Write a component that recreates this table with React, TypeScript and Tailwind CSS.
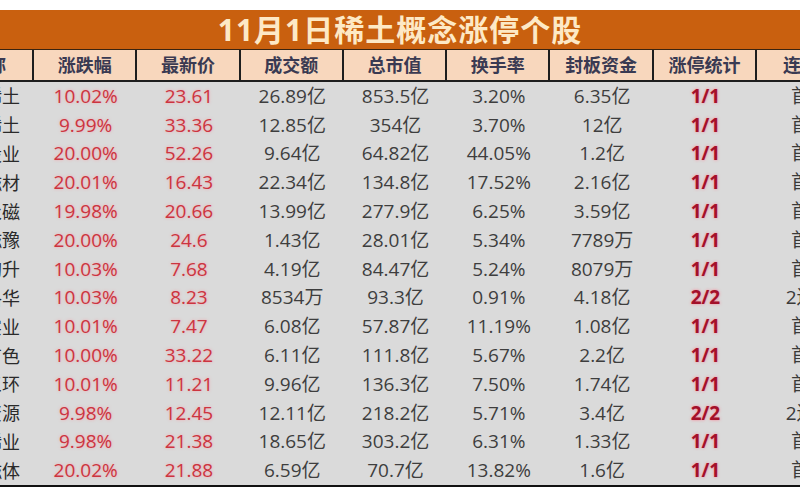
import React from 'react';

const headers = ['股票简称', '涨跌幅', '最新价', '成交额', '总市值', '换手率', '封板资金', '涨停统计', '连板数'];

const rows: string[][] = [
  ['北方稀土', '10.02%', '23.61', '26.89亿', '853.5亿', '3.20%', '6.35亿', '1/1', '首板'],
  ['中国稀土', '9.99%', '33.36', '12.85亿', '354亿', '3.70%', '12亿', '1/1', '首板'],
  ['中钢股业', '20.00%', '52.26', '9.64亿', '64.82亿', '44.05%', '1.2亿', '1/1', '首板'],
  ['正海磁材', '20.01%', '16.43', '22.34亿', '134.8亿', '17.52%', '2.16亿', '1/1', '首板'],
  ['金力永磁', '19.98%', '20.66', '13.99亿', '277.9亿', '6.25%', '3.59亿', '1/1', '首板'],
  ['天和磁豫', '20.00%', '24.6', '1.43亿', '28.01亿', '5.34%', '7789万', '1/1', '首板'],
  ['宁波韵升', '10.03%', '7.68', '4.19亿', '84.47亿', '5.24%', '8079万', '1/1', '首板'],
  ['英洛华', '10.03%', '8.23', '8534万', '93.3亿', '0.91%', '4.18亿', '2/2', '2连板'],
  ['北矿实业', '10.01%', '7.47', '6.08亿', '57.87亿', '11.19%', '1.08亿', '1/1', '首板'],
  ['广晟有色', '10.00%', '33.22', '6.11亿', '111.8亿', '5.67%', '2.2亿', '1/1', '首板'],
  ['中科三环', '10.01%', '11.21', '9.96亿', '136.3亿', '7.50%', '1.74亿', '1/1', '首板'],
  ['盛和资源', '9.98%', '12.45', '12.11亿', '218.2亿', '5.71%', '3.4亿', '2/2', '2连板'],
  ['五矿稀业', '9.98%', '21.38', '18.65亿', '303.2亿', '6.31%', '1.33亿', '1/1', '首板'],
  ['银河磁体', '20.02%', '21.88', '6.59亿', '70.7亿', '13.82%', '1.6亿', '1/1', '首板'],
];

const cols = 'grid grid-cols-[104px_103.3px_103.3px_103.3px_103.3px_103.3px_103.3px_103.3px_104px]';

function cellClass(i: number) {
  if (i === 0) return 'text-right pr-[14px] text-[#2a2a2a] text-[18px]';
  if (i === 1 || i === 2) return 'text-center text-[#cc3440] [text-shadow:0_0_3px_rgba(255,140,150,0.7)]';
  if (i === 7) return 'text-center font-bold text-[#a3102a] [text-shadow:0_0_3px_rgba(255,120,140,0.9)]';
  if (i === 8) return 'text-center pl-[2px] text-[#3a3a3a]';
  return 'text-center text-[#3e3e3e]';
}

function headClass(i: number) {
  if (i === 0) return 'justify-end pr-[26px]';
  if (i === 8) return 'justify-center pl-[4px]';
  return 'justify-center';
}

export default function App() {
  return (
    <div className="w-[800px] h-[500px] bg-white overflow-hidden pt-[10px] font-['Open_Sans','Noto_Sans_CJK_SC',sans-serif]">
      <div className="h-[39px] bg-[#c9600f] flex items-center justify-center">
        <span className="text-[30px] font-bold tracking-[1px] text-[#fde9c6] leading-none">11月1日稀土概念涨停个股</span>
      </div>
      <div className="-ml-[70px] w-[940px]">
        <div className={`${cols} h-[33px] border-t border-[#3a2410] border-b-2 border-b-[#1e1e1e] bg-[#f8d7bd]`}>
          {headers.map((h, i) => (
            <div
              key={h}
              className={`flex items-center ${headClass(i)} border-r-2 border-[#1e1e1e] text-[18px] font-bold text-[#3a3a52] whitespace-nowrap`}
            >
              {h}
            </div>
          ))}
        </div>
        <div className="bg-[#dadada] border-b-2 border-[#111]">
          {rows.map((r, ri) => (
            <div key={ri} className={`${cols} h-[28.8px] items-center text-[19px] leading-none`}>
              {r.map((c, i) => (
                <div key={i} className={`whitespace-nowrap ${cellClass(i)}`}>
                  {c}
                </div>
              ))}
            </div>
          ))}
        </div>
      </div>
    </div>
  );
}
